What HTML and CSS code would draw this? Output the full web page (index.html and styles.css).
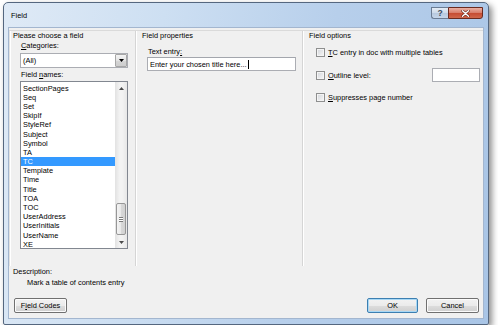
FILE: index.html
```html
<!DOCTYPE html>
<html lang="en">
<head>
  <meta charset="UTF-8" />
  <meta name="viewport" content="width=device-width, initial-scale=1.0"/>
  <title>Field</title>
  <link rel="stylesheet" href="styles.css">
</head>
<body>
  <div class="window">
    <div class="titlebar">
      <span class="title">Field</span>
      <div class="caption-buttons">
        <div class="cap cap-help">?</div>
        <div class="cap cap-close">
          <svg width="9" height="7" viewBox="0 0 9 7">
            <path d="M1.5 0.8 L7.5 6.2 M7.5 0.8 L1.5 6.2" stroke="#5a1d12" stroke-width="2.6" stroke-linecap="round"/>
            <path d="M1.5 0.8 L7.5 6.2 M7.5 0.8 L1.5 6.2" stroke="#fff" stroke-width="1.5" stroke-linecap="round"/>
          </svg>
        </div>
      </div>
    </div>

    <div class="client">
      <div class="panels">
        <div class="panel panel-choose">
          <div class="panel-title">Please choose a field</div>
          <div class="field-label"><u>C</u>ategories:</div>
          <div class="combo">
            <span class="combo-value">(All)</span>
            <span class="combo-btn">
              <svg width="5" height="3" viewBox="0 0 5 3"><path d="M0 0 H5 L2.5 3 Z" fill="#000"/></svg>
            </span>
          </div>
          <div class="field-label">Field <u>n</u>ames:</div>
          <div class="listbox">
            <ul class="list-items">
              <li>SectionPages</li>
              <li>Seq</li>
              <li>Set</li>
              <li>SkipIf</li>
              <li>StyleRef</li>
              <li>Subject</li>
              <li>Symbol</li>
              <li>TA</li>
              <li class="selected">TC</li>
              <li>Template</li>
              <li>Time</li>
              <li>Title</li>
              <li>TOA</li>
              <li>TOC</li>
              <li>UserAddress</li>
              <li>UserInitials</li>
              <li>UserName</li>
              <li>XE</li>
            </ul>
            <div class="scrollbar">
              <div class="sb-btn">
                <svg width="5" height="3" viewBox="0 0 5 3"><path d="M0 3 H5 L2.5 0 Z" fill="#4a4a4a"/></svg>
              </div>
              <div class="sb-track">
                <div class="sb-thumb"><span class="grip"></span></div>
              </div>
              <div class="sb-btn">
                <svg width="5" height="3" viewBox="0 0 5 3"><path d="M0 0 H5 L2.5 3 Z" fill="#4a4a4a"/></svg>
              </div>
            </div>
          </div>
        </div>

        <div class="panel panel-props">
          <div class="panel-title">Field properties</div>
          <div class="field-label">Text entry<u>:</u></div>
          <div class="textbox">Enter your chosen title here...<span class="caret"></span></div>
        </div>

        <div class="panel panel-options">
          <div class="panel-title">Field options</div>
          <div class="option option-first">
            <span class="checkbox"></span>
            <span class="option-text"><u>T</u>C entry in doc with multiple tables</span>
          </div>
          <div class="option option-outline">
            <span class="checkbox"></span>
            <span class="option-text"><u>O</u>utline level:</span>
            <span class="small-input"></span>
          </div>
          <div class="option option-last">
            <span class="checkbox"></span>
            <span class="option-text"><u>S</u>uppresses page number</span>
          </div>
        </div>
      </div>

      <div class="description">
        <div class="desc-label">Description:</div>
        <div class="desc-text">Mark a table of contents entry</div>
      </div>

      <div class="footer">
        <div class="btn btn-codes">F<u>i</u>eld Codes</div>
        <div class="footer-right">
          <div class="btn btn-ok">OK</div>
          <div class="btn btn-cancel">Cancel</div>
        </div>
      </div>
    </div>
  </div>
</body>
</html>
```

FILE: styles.css
```css
* {
  box-sizing: border-box;
}
body {
  margin: 0;
  background: #fff;
  font-family: 'Liberation Sans', Arial, sans-serif;
  font-size: 7.4px;
  color: #000;
}
u {
  text-decoration: underline;
  text-underline-offset: 1px;
}

/* window frame */
.window {
  margin: 2px 0 0 3px;
  width: 486px;
  height: 323px;
  border: 1px solid #55677f;
  border-radius: 5px 5px 2px 2px;
  background: linear-gradient(100deg, #dfeaf6 0%, #cddff2 30%, #b7cfeb 62%, #a9c5e6 100%);
  box-shadow: 3px 3px 6px rgba(0, 0, 0, 0.45);
  display: flex;
  flex-direction: column;
  padding: 0 5px 6px;
}
.titlebar {
  height: 25px;
  display: flex;
  align-items: flex-start;
}
.title {
  margin: 8px 0 0 2px;
  line-height: 10px;
}
.caption-buttons {
  margin-left: auto;
  margin-top: 4px;
  display: flex;
}
.cap {
  height: 12px;
  display: flex;
  align-items: center;
  justify-content: center;
  border: 1px solid #6b7c93;
}
.cap-help {
  width: 17px;
  border-right: none;
  border-radius: 0 0 0 3px;
  background: linear-gradient(#e4ecf5, #ccd9e9 50%, #b6c8de 51%, #c6d6ea);
  color: #3a4a60;
  font-weight: bold;
  font-size: 8.5px;
}
.cap-close {
  width: 35px;
  border-color: #6a2a20;
  border-radius: 0 0 3px 0;
  background: linear-gradient(#eab0a3, #d9806e 45%, #c54a31 50%, #d0674c);
}

/* client area */
.client {
  flex: 1;
  background: #f0f0f0;
  box-shadow: 0 0 0 1px #a3b6cf;
  display: flex;
  flex-direction: column;
  padding-top: 2px;
}
.panels {
  height: 236px;
  display: flex;
  border-top: 1px solid #dadada;
}
.panel {
  border-left: 1px solid #d5d5d5;
  box-shadow: inset 1px 0 #fff;
}
.panel-choose {
  width: 126px;
  padding-left: 3px;
  border-left-color: #e2e2e2;
}
.panel-props {
  width: 167px;
  padding-left: 6px;
}
.panel-options {
  flex: 1;
  padding-left: 6px;
}
.panel-title {
  line-height: 10px;
}
.field-label {
  line-height: 10px;
}
.panel-choose .field-label {
  margin-left: 8px;
}
.panel-choose .field-label:first-of-type {
  margin-top: 5px;
}

/* combo box */
.combo {
  margin: 2px 0 2px 7px;
  width: 108px;
  height: 15px;
  border: 1px solid #abadb3;
  background: #fff;
  display: flex;
  align-items: center;
}
.combo-value {
  flex: 1;
  padding-left: 2px;
}
.combo-btn {
  width: 12px;
  height: 13px;
  border: 1px solid #a7a7a7;
  border-radius: 1px;
  background: linear-gradient(#f4f4f4, #e4e4e4 50%, #d6d6d6 51%, #cdcdcd);
  display: flex;
  align-items: center;
  justify-content: center;
}

/* list box */
.listbox {
  margin: 1px 0 0 7px;
  width: 108px;
  height: 168px;
  border: 1px solid #828790;
  background: #fff;
  display: flex;
}
.list-items {
  flex: 1;
  margin: 0;
  padding: 1.6px 0 0;
  list-style: none;
}
.list-items li {
  height: 9.2px;
  line-height: 9.2px;
  padding-left: 2px;
}
.list-items li.selected {
  background: #3399ff;
  color: #fff;
}
.scrollbar {
  width: 12px;
  display: flex;
  flex-direction: column;
  background: linear-gradient(to right, #e2e2e2, #f3f3f3 40%, #f3f3f3 60%, #e7e7e7);
}
.sb-btn {
  height: 12px;
  display: flex;
  align-items: center;
  justify-content: center;
}
.sb-track {
  flex: 1;
  display: flex;
  flex-direction: column;
  justify-content: flex-end;
  padding-bottom: 1px;
}
.sb-thumb {
  height: 32px;
  margin: 0 1px;
  border: 1px solid #979797;
  border-radius: 2px;
  background: linear-gradient(to right, #f4f4f4, #e8e8e8 50%, #d8d8d8 51%, #d2d2d2);
  display: flex;
  align-items: center;
  justify-content: center;
}
.grip {
  width: 4px;
  height: 5px;
  border-top: 1px solid #7a7a7a;
  border-bottom: 1px solid #7a7a7a;
  background: linear-gradient(#fff 40%, #7a7a7a 40%, #7a7a7a 60%, #fff 60%);
}

/* field properties */
.panel-props .field-label {
  margin: 6px 0 0 6px;
}
.textbox {
  margin-left: 5px;
  width: 149px;
  height: 14px;
  border: 1px solid #abadb3;
  border-top-color: #a3a6ad;
  background: #fff;
  padding-left: 2px;
  display: flex;
  align-items: center;
}
.caret {
  display: inline-block;
  width: 1px;
  height: 9px;
  margin-left: 1px;
  background: #000;
}

/* field options */
.option {
  margin-left: 7px;
  width: 164px;
  height: 14px;
  display: flex;
  align-items: center;
}
.option-first {
  margin-top: 4px;
}
.option-outline {
  margin-top: 9px;
}
.option-last {
  margin-top: 8px;
}
.checkbox {
  width: 9px;
  height: 9px;
  border: 1px solid #8e8f8f;
  background: linear-gradient(135deg, #d2d5da, #f7f7f7);
  box-shadow: inset 0 0 0 1px #f4f4f4;
}
.option-text {
  margin-left: 3px;
}
.small-input {
  margin-left: auto;
  width: 48px;
  height: 14px;
  border: 1px solid #abadb3;
  background: #fff;
}

/* description and buttons */
.description {
  line-height: 11px;
  padding-left: 4px;
}
.desc-text {
  margin-left: 14px;
}
.footer {
  margin-top: 10px;
  display: flex;
  padding: 0 4px 0 5px;
}
.footer-right {
  margin-left: auto;
  display: flex;
  gap: 8px;
}
.btn {
  height: 15px;
  border: 1px solid #707070;
  border-radius: 2px;
  background: linear-gradient(#f2f2f2, #ebebeb 50%, #dddddd 51%, #cfcfcf);
  box-shadow: inset 0 0 0 1px #fbfbfb;
  display: flex;
  align-items: center;
  justify-content: center;
}
.btn-codes {
  width: 53px;
}
.btn-ok {
  width: 51px;
  border-color: #3c7fb1;
  box-shadow: inset 0 0 0 1px #a8d8f5;
}
.btn-cancel {
  width: 53px;
}
```
